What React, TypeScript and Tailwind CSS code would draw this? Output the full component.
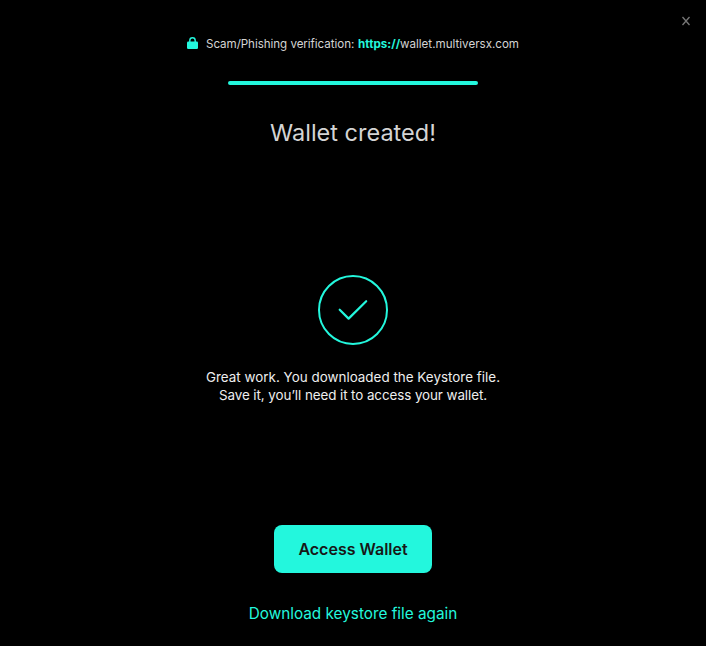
export default function App() {
  return (
    <main className="flex h-[646px] w-full flex-col items-center bg-black font-['Inter','Liberation_Sans',sans-serif] text-white">
      <header className="flex h-[81px] w-full flex-col">
        <div className="flex h-[30px] justify-end pt-4 pr-[15px]">
          <button aria-label="Close" className="flex size-[10px]">
            <svg viewBox="0 0 10 10" className="size-[10px]" fill="none" stroke="#777777" strokeWidth="1.3">
              <path d="M1.5 1 8.5 9M8.5 1 1.5 9" />
            </svg>
          </button>
        </div>
        <div className="flex h-7 items-center justify-center text-[11.6px] leading-4 whitespace-nowrap text-[#d4d4d4]">
          <svg viewBox="0 0 11 12" className="mr-2 mb-0.5 h-3 w-[11px]" fill="none">
            <path d="M2.8 5V3.5a2.7 2.7 0 0 1 5.4 0V5" stroke="#23f7dd" strokeWidth="1.4" />
            <rect y="4.5" width="11" height="7.5" rx="1.3" fill="#23f7dd" />
          </svg>
          <span className="mr-1 w-[148px] tracking-[-0.05px]">Scam/Phishing verification:</span>
          <span className="w-[42px] font-bold tracking-[0.05px] text-[#23f7dd]">https://</span>
          <span className="w-[119px]">wallet.multiversx.com</span>
        </div>
      </header>
      <div className="h-1 w-[250px] rounded-sm bg-[#23f7dd]" />
      <h1 className="mt-8 text-[23.5px] leading-8 text-[#d4d4d4]">Wallet created!</h1>
      <svg viewBox="0 0 70 70" className="mt-[126px] size-[70px]" fill="none" stroke="#23f7dd" strokeWidth="2">
        <circle cx="35" cy="35" r="34" />
        <path d="m21.7 34.7 8.9 8.9L48.2 26.2" strokeWidth="2.2" strokeLinecap="round" strokeLinejoin="round" />
      </svg>
      <p className="mt-[23px] flex flex-col items-center text-[13.4px] leading-[18px] whitespace-nowrap text-[#eeeeee]">
        <span className="tracking-[0.02px]">Great work. You downloaded the Keystore file.</span>
        <span className="tracking-[-0.08px]">Save it, you’ll need it to access your wallet.</span>
      </p>
      <button className="mt-[121px] h-12 w-[158px] rounded-lg bg-[#23f7dd] text-[16px] font-semibold text-[#171717]">
        Access Wallet
      </button>
      <a className="mt-[29px] text-[15.3px] leading-6 text-[#23f7dd]">Download keystore file again</a>
    </main>
  );
}
